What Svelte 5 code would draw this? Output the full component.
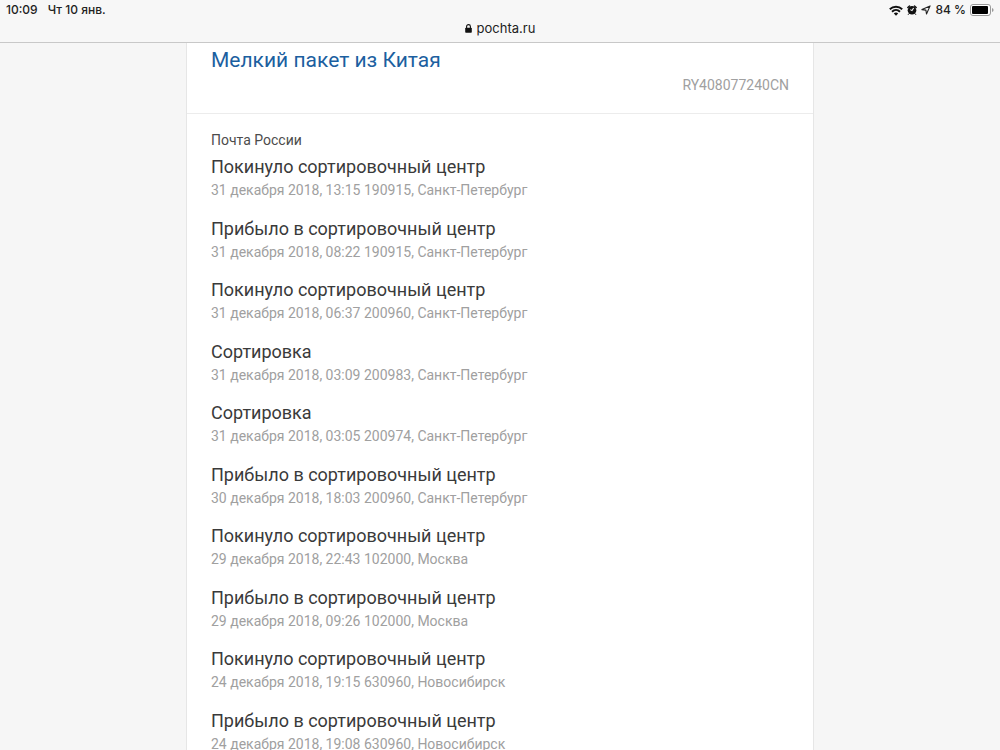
<script lang="ts">
  interface TrackEvent {
    title: string;
    date: string;
    place: string;
  }

  const LEFT = 'Покинуло сортировочный центр';
  const ARRIVED = 'Прибыло в сортировочный центр';
  const SORTING = 'Сортировка';

  const trackNumber = 'RY408077240CN';

  const events: TrackEvent[] = [
    { title: LEFT, date: '31 декабря 2018, 13:15', place: '190915, Санкт-Петербург' },
    { title: ARRIVED, date: '31 декабря 2018, 08:22', place: '190915, Санкт-Петербург' },
    { title: LEFT, date: '31 декабря 2018, 06:37', place: '200960, Санкт-Петербург' },
    { title: SORTING, date: '31 декабря 2018, 03:09', place: '200983, Санкт-Петербург' },
    { title: SORTING, date: '31 декабря 2018, 03:05', place: '200974, Санкт-Петербург' },
    { title: ARRIVED, date: '30 декабря 2018, 18:03', place: '200960, Санкт-Петербург' },
    { title: LEFT, date: '29 декабря 2018, 22:43', place: '102000, Москва' },
    { title: ARRIVED, date: '29 декабря 2018, 09:26', place: '102000, Москва' },
    { title: LEFT, date: '24 декабря 2018, 19:15', place: '630960, Новосибирск' },
    { title: ARRIVED, date: '24 декабря 2018, 19:08', place: '630960, Новосибирск' },
  ];
</script>

<div class="screen">
  <header class="browser-bar">
    <div class="status">
      <div class="status-group clock">
        <span>10:09</span>
        <span>Чт 10 янв.</span>
      </div>
      <div class="status-group indicators">
        <svg width="14" height="11" viewBox="0 0 14 11" aria-hidden="true">
          <g fill="none" stroke="#111" stroke-width="1.9">
            <path d="M0.8 4.3C4.3 0.9 9.7 0.9 13.2 4.3" />
            <path d="M3 6.7C5.3 4.5 8.7 4.5 11 6.7" />
          </g>
          <path d="M4.8 8.4Q7 6.6 9.2 8.4L7 10.7Z" fill="#111" />
        </svg>
        <svg width="10" height="10" viewBox="0 0 10 10" aria-hidden="true">
          <circle cx="5" cy="5.3" r="4.3" fill="#111" />
          <path d="M0.8 2.5L2.5 0.9M9.2 2.5L7.5 0.9" stroke="#111" stroke-width="1.4" stroke-linecap="round" />
          <path d="M2 8.6L1.3 9.5M8 8.6L8.7 9.5" stroke="#111" stroke-linecap="round" />
          <path d="M6.6 3L5 5.6L3.3 4.6" fill="none" stroke="#f7f7f7" stroke-width="1.1" />
        </svg>
        <svg width="10" height="10" viewBox="0 0 10 10" aria-hidden="true">
          <path d="M9.1 0.9L5.5 9L4.9 5.1L0.9 4.6Z" fill="none" stroke="#222" stroke-width="1.1" stroke-linejoin="round" />
        </svg>
        <span>84 %</span>
        <svg width="24" height="12" viewBox="0 0 24 12" aria-hidden="true">
          <rect x="0.5" y="0.5" width="20" height="11" rx="2.5" fill="#fff" stroke="#999" />
          <rect x="2" y="2" width="16" height="8" rx="1" fill="#000" />
          <path d="M22 4Q23.6 4.6 23.6 6T22 8Z" fill="#999" />
        </svg>
      </div>
    </div>
    <a class="address" href="#top">
      <svg width="7" height="9" viewBox="0 0 7 9" aria-hidden="true">
        <rect x="0.2" y="3.7" width="6.6" height="5" rx="0.8" fill="#111" />
        <path d="M1.6 4V2.5a1.9 1.9 0 0 1 3.8 0V4" fill="none" stroke="#111" stroke-width="1.1" />
      </svg>
      pochta.ru
    </a>
  </header>

  <main class="card" id="top">
    <section class="parcel">
      <h1>Мелкий пакет из Китая</h1>
      <p class="track">{trackNumber}</p>
    </section>
    <section class="history">
      <h2>Почта России</h2>
      <ol>
        {#each events as event}
          <li>
            <h3>{event.title}</h3>
            <p>{event.date} {event.place}</p>
          </li>
        {/each}
      </ol>
    </section>
  </main>
</div>

<style>
  :global(body) {
    margin: 0;
    background: #f6f6f6;
  }
  h1,
  h2,
  h3,
  p,
  ol {
    margin: 0;
    padding: 0;
    font-weight: 400;
  }
  .screen {
    display: flex;
    flex-direction: column;
    height: 100vh;
    overflow: hidden;
    font-family: Roboto, 'Noto Sans', sans-serif;
  }
  .browser-bar {
    flex-shrink: 0;
    padding: 1px 0 5px;
    background: #f7f7f7;
    border-bottom: 1px solid #c8c8c8;
    color: #222;
    font-family: Inter, 'Liberation Sans', sans-serif;
  }
  .status {
    display: flex;
    justify-content: space-between;
    padding: 0 6px;
    font-size: 12px;
    font-weight: 500;
    line-height: 18px;
  }
  .status-group {
    display: flex;
    align-items: center;
  }
  .clock {
    gap: 10px;
  }
  .indicators {
    gap: 4px;
  }
  .address {
    display: flex;
    align-items: center;
    justify-content: center;
    gap: 5px;
    color: inherit;
    font-size: 13px;
    line-height: 18px;
    text-decoration: none;
  }
  .card {
    flex-shrink: 0;
    box-sizing: border-box;
    width: 100%;
    max-width: 628px;
    margin: 0 auto;
    background: #fff;
    border: solid #e6e6e6;
    border-width: 0 1px;
  }
  .parcel {
    padding: 3px 24px 18px;
    border-bottom: 1px solid #ececec;
  }
  h1 {
    color: #1c5fa0;
    font-size: 21px;
    line-height: 28px;
  }
  .track {
    margin-top: 1px;
    color: #a0a0a0;
    font-size: 14px;
    line-height: 20px;
    text-align: right;
  }
  .history {
    padding: 16px 24px;
  }
  h2 {
    color: #4c4c4c;
    font-size: 14px;
    line-height: 20px;
  }
  ol {
    list-style: none;
  }
  li {
    padding: 4px 0 11px;
  }
  li:nth-child(odd) {
    padding-bottom: 12px;
  }
  h3 {
    color: #3a3a3a;
    font-size: 18px;
    line-height: 25px;
  }
  li p {
    margin-top: 1px;
    color: #a0a0a0;
    font-size: 14px;
    line-height: 20px;
  }
</style>
